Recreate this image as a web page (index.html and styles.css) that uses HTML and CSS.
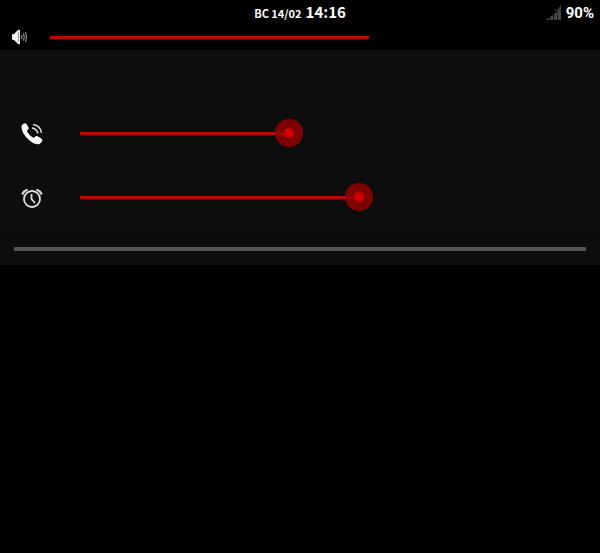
FILE: index.html
```
<!DOCTYPE html>
<html lang="ru">
<head>
	<meta charset="utf-8">
	<meta name="viewport" content="width=device-width, initial-scale=1">
	<title>Volume</title>
	<link rel="stylesheet" href="styles.css">
</head>
<body>
	<header class="status-bar">
		<div class="clock"><span class="date">ВС 14/02</span><time>14:16</time></div>
		<div class="battery">
			<svg class="signal" viewBox="0 0 16 16" aria-hidden="true">
				<path d="M0 15h3v-2l-3 1zM4 15h3v-5l-3 2zM8 15h3V7l-3 2zM12 15h3V0l-3 4z" fill="#444"/>
				<path d="M9 5l4 2-2 2 3 3-4 2M5 11l3 2" fill="none" stroke="#4c4c4c" stroke-width="1"/>
			</svg>
			<span>90%</span>
		</div>
	</header>

	<label class="media-row">
		<svg class="icon-media" viewBox="0 0 16 16" role="img" aria-label="Media volume">
			<path d="M0 6q0-1 1-1h1l4-4q2-1 2 1v12q0 2-2 1l-4-4H1q-1 0-1-1z" fill="#f2f2f2"/>
			<path d="M6.500 3v10" stroke="#999" fill="none"/>
			<path d="M9.500 6q1 2 0 4M11.500 4.500q1.500 3.500 0 7M13.500 3q2 5 0 10" fill="none" stroke="#aaa" stroke-width="1"/>
		</svg>
		<input class="slider slider-plain" type="range" min="0" max="15" value="9" style="--fill: 60%">
	</label>

	<main class="panel">
		<label class="volume-row">
			<svg class="icon" viewBox="0 0 24 24" role="img" aria-label="Ring volume">
				<path d="M1.500 5Q2.500 2.500 5 2.200Q6.500 2.200 8.500 6.500Q9.300 8 6.700 10Q8.500 14 13.500 17Q15.800 14.400 17 15Q21.500 17 22.500 19Q22.500 21 19.500 23Q15.500 24.500 9 19Q1 12 1.500 5z" fill="#fff"/>
				<path d="M13 3.500q7.500 1 8.500 8.500M12 7q4.500.5 6 5.500" fill="none" stroke="#ddd" stroke-width="1.500"/>
			</svg>
			<input class="slider" type="range" min="0" max="7" value="3" style="--fill: 42.857%">
		</label>
		<label class="volume-row">
			<svg class="icon" viewBox="0 0 24 24" role="img" aria-label="Alarm volume">
				<circle cx="12" cy="14" r="8" fill="none" stroke="#ddd" stroke-width="1.800"/>
				<path d="M11.500 9v5l3.500 4" fill="none" stroke="#ddd" stroke-width="1.800"/>
				<path d="M2.200 9.500q1.500-3.500 5.300-5M21.800 9.500q-1.500-3.500-5.300-5" fill="none" stroke="#ddd" stroke-width="2"/>
			</svg>
			<input class="slider" type="range" min="0" max="7" value="4" style="--fill: 57.143%">
		</label>
		<div class="handle"></div>
	</main>
</body>
</html>
```
FILE: styles.css
```
* {
	box-sizing: border-box;
}

body {
	margin: 0;
	background-color: #000;
	color: #fff;
	font-family: "Noto Sans CJK JP", sans-serif;
	font-weight: bold;
}

/* status bar */
.status-bar {
	display: grid;
	grid-template-columns: 1fr auto 1fr;
	align-items: center;
	height: 24px;
	padding: 0 6px;
}

.clock {
	display: flex;
	align-items: baseline;
	gap: 4px;
	grid-column: 2;
	font-size: 15px;
	line-height: 24px;
	white-space: nowrap;
}

.date {
	font-size: 11px;
}

.battery {
	display: flex;
	justify-content: flex-end;
	align-items: center;
	gap: 4px;
	font-family: Roboto, sans-serif;
	font-size: 15px;
	line-height: 24px;
}

.signal {
	width: 16px;
	height: 16px;
}

/* rows with sliders */
.media-row {
	display: flex;
	align-items: center;
	gap: 22px;
	height: 26px;
	padding: 0 18px 0 12px;
}

.icon-media {
	flex: none;
	width: 16px;
	height: 16px;
}

.panel {
	padding-top: 51px;
	background-color: #0d0d0d;
}

.volume-row {
	display: flex;
	align-items: center;
	gap: 22px;
	height: 64px;
	padding: 0 18px 0 20px;
}

.icon {
	flex: none;
	width: 24px;
	height: 24px;
}

.slider {
	--inset: 14px;
	flex: 1;
	min-width: 0;
	height: 28px;
	margin: 0;
	background: none;
	appearance: none;
	-webkit-appearance: none;
	cursor: pointer;
}

.slider::-webkit-slider-runnable-track {
	height: 28px;
	background: linear-gradient(to right, #b90a0a var(--fill), #100c0c var(--fill)) 50% 50% / calc(100% - 2 * var(--inset)) 3px no-repeat;
}

.slider::-webkit-slider-thumb {
	-webkit-appearance: none;
	width: 28px;
	height: 28px;
	border-radius: 50%;
	background: radial-gradient(circle, #d00000 4px, rgba(145, 0, 0, 0.85) 6px);
}

.slider-plain {
	--inset: 0px;
}

.slider-plain::-webkit-slider-runnable-track {
	background: linear-gradient(to right, #b90a0a var(--fill), #040000 var(--fill)) 50% 50% / 100% 3px no-repeat;
}

.slider-plain::-webkit-slider-thumb {
	opacity: 0;
}

.handle {
	margin-top: 3px;
	padding: 14px;
	border-top: 1px solid #090909;
}

.handle::before {
	content: "";
	display: block;
	height: 4px;
	background-color: #555;
}
```
